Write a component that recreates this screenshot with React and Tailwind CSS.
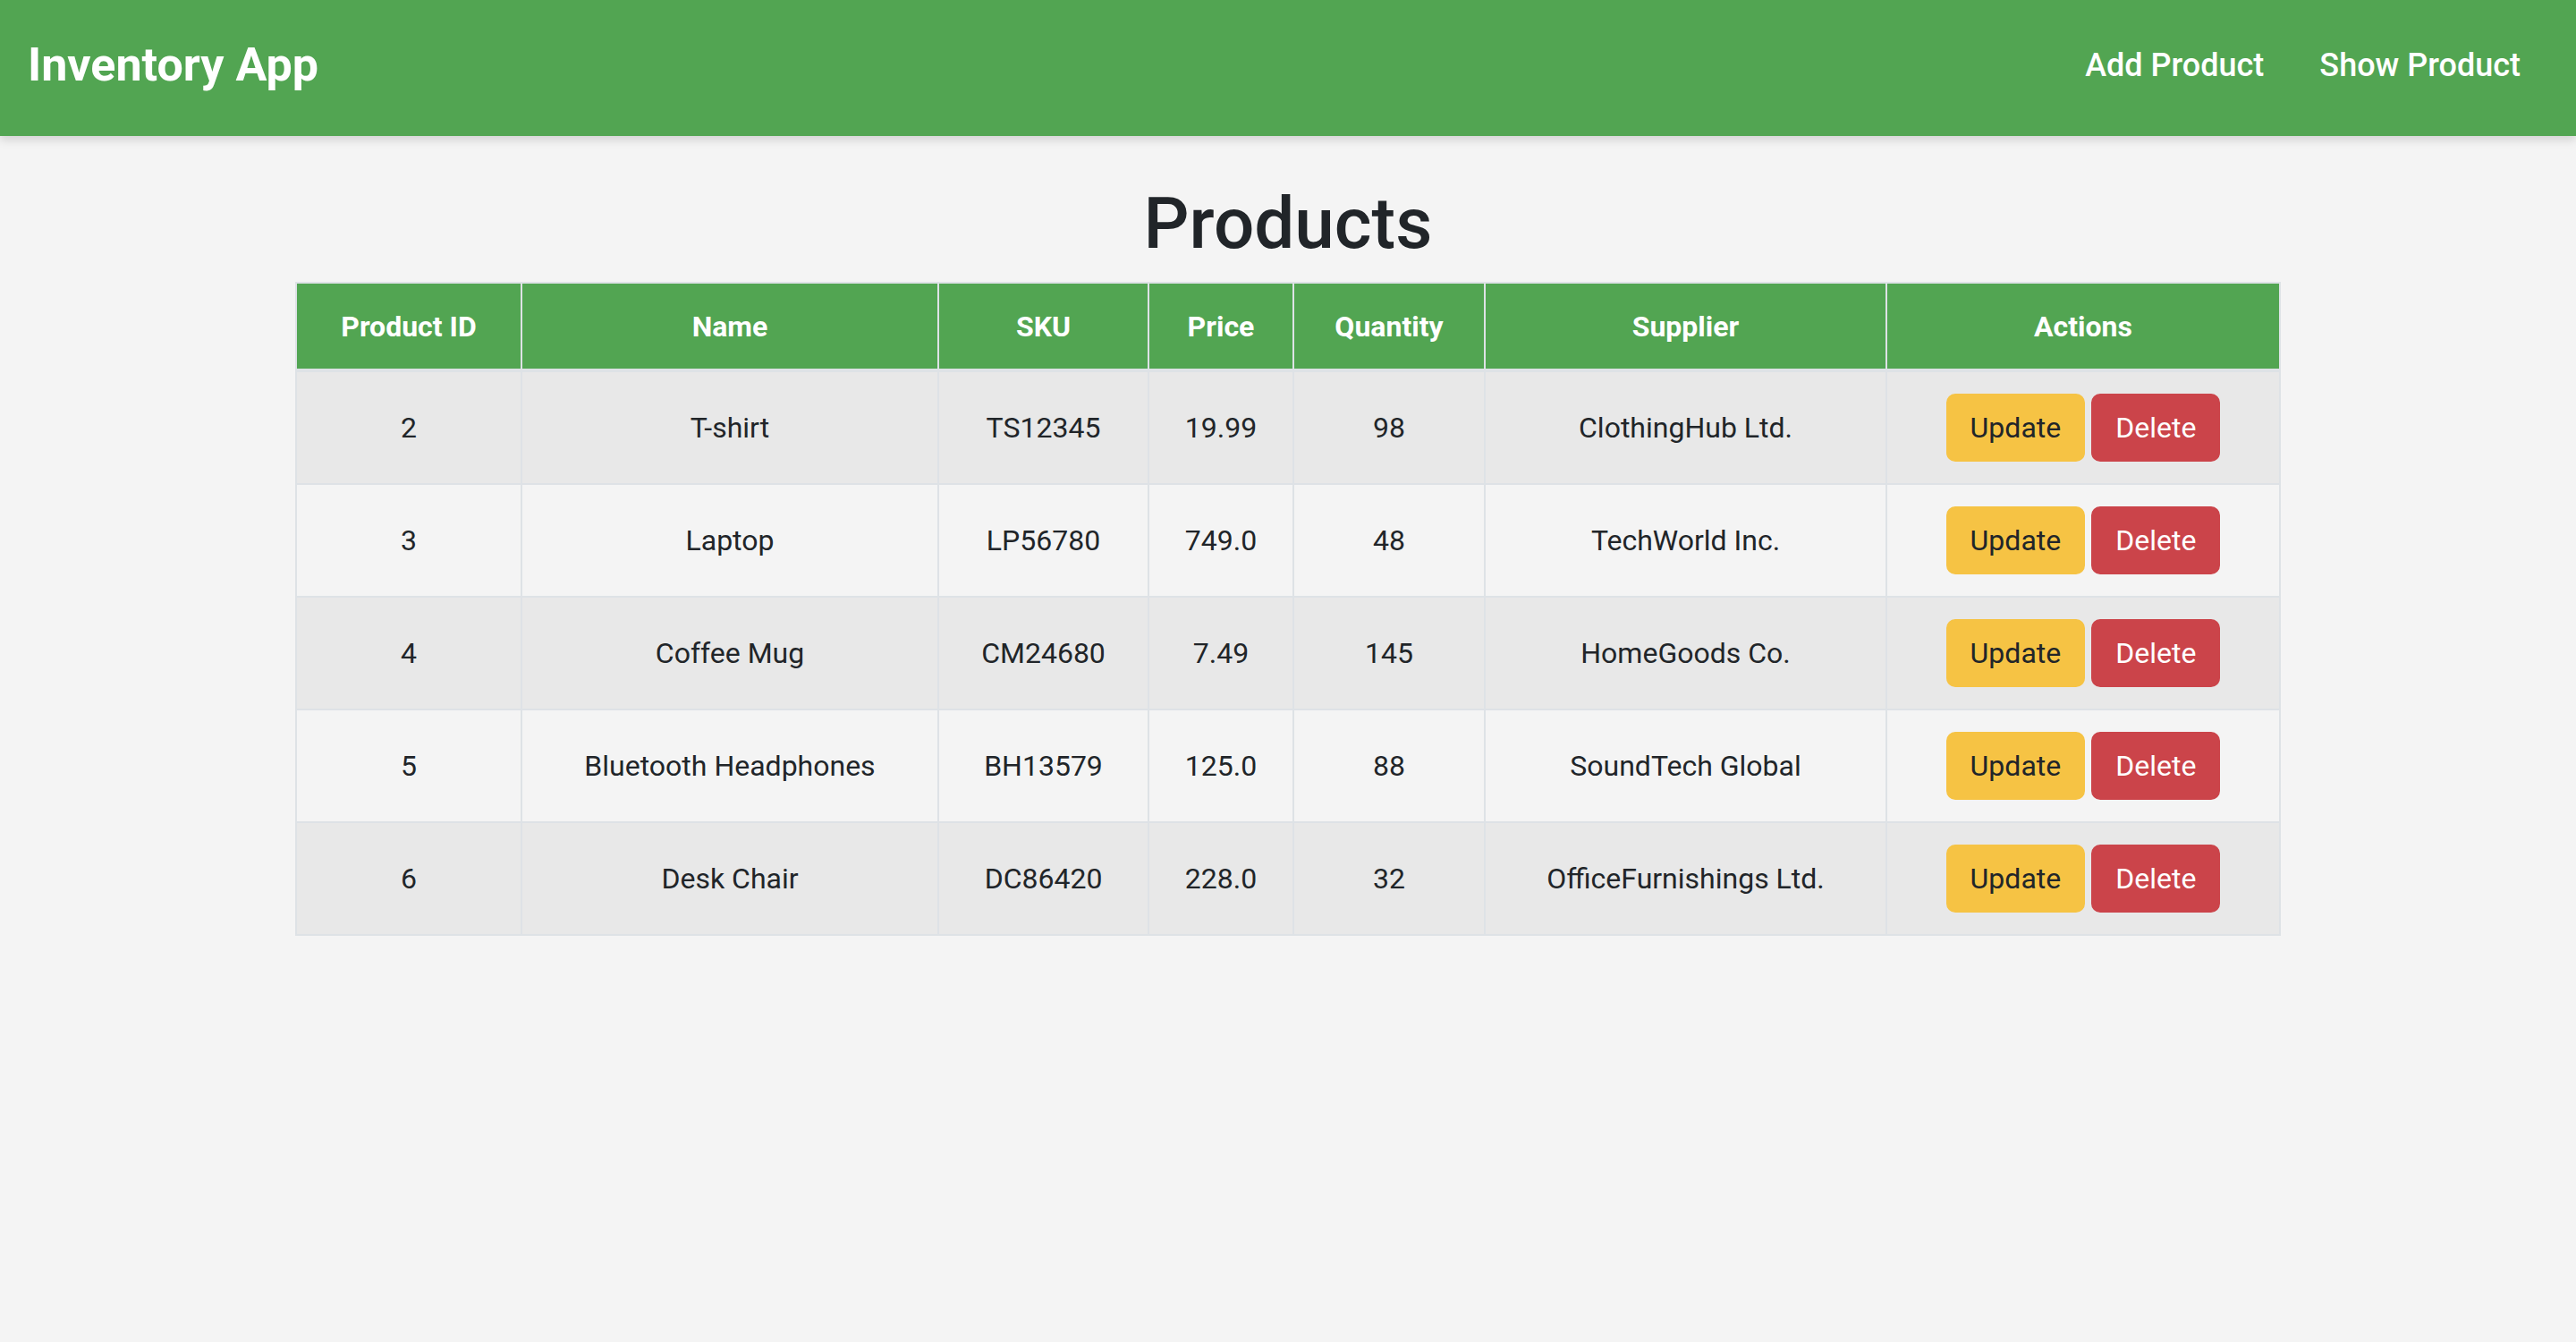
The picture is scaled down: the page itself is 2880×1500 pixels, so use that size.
import React from "react";

const rows = [
  { id: 2, name: "T-shirt", sku: "TS12345", price: "19.99", qty: 98, supplier: "ClothingHub Ltd." },
  { id: 3, name: "Laptop", sku: "LP56780", price: "749.0", qty: 48, supplier: "TechWorld Inc." },
  { id: 4, name: "Coffee Mug", sku: "CM24680", price: "7.49", qty: 145, supplier: "HomeGoods Co." },
  { id: 5, name: "Bluetooth Headphones", sku: "BH13579", price: "125.0", qty: 88, supplier: "SoundTech Global" },
  { id: 6, name: "Desk Chair", sku: "DC86420", price: "228.0", qty: 32, supplier: "OfficeFurnishings Ltd." },
];

const cols = [
  { label: "Product ID", w: "w-[254px]" },
  { label: "Name", w: "w-[466px]" },
  { label: "SKU", w: "w-[235px]" },
  { label: "Price", w: "w-[162px]" },
  { label: "Quantity", w: "w-[214px]" },
  { label: "Supplier", w: "w-[449px]" },
  { label: "Actions", w: "w-[440px]" },
];

export default function App() {
  return (
    <div className="min-h-screen bg-[#f4f4f4] text-[#212529] font-['Roboto',sans-serif]">
      <header className="relative z-10 flex h-[152px] items-center justify-between bg-[#52a552] pl-[31px] pr-[62px] shadow-[0_4px_10px_rgba(0,0,0,0.15)]">
        <div className="mb-[6px] text-[52px] font-bold leading-[60px] text-white">Inventory App</div>
        <nav className="mb-[7px] flex gap-[62px] text-[36px] font-medium leading-[44px] text-white">
          <a href="#">Add Product</a>
          <a href="#">Show Product</a>
        </nav>
      </header>

      <main className="flex flex-col items-center">
        <h1 className="mt-[50px] mb-[17px] text-[80px] font-medium leading-[96px]">Products</h1>
        <table className="w-[2220px] table-fixed border-separate border-spacing-0 text-center text-[32px] leading-[48px]">
          <thead>
            <tr>
              {cols.map((c, i) => (
                <th
                  key={c.label}
                  className={`${c.w} border-t-2 border-r-2 border-b-4 border-[#dee2e6] bg-[#52a552] py-[23.5px] font-bold text-white ${i === 0 ? "border-l-2" : ""}`}
                >
                  {c.label}
                </th>
              ))}
            </tr>
          </thead>
          <tbody>
            {rows.map((r, idx) => {
              const bg = idx % 2 === 0 ? "bg-[#e8e8e8]" : "bg-[#f4f4f4]";
              const cell = `border-r-2 border-b-2 border-[#dee2e6] py-[38px] ${bg}`;
              return (
                <tr key={r.id}>
                  <td className={`${cell} border-l-2`}>{r.id}</td>
                  <td className={cell}>{r.name}</td>
                  <td className={cell}>{r.sku}</td>
                  <td className={cell}>{r.price}</td>
                  <td className={cell}>{r.qty}</td>
                  <td className={cell}>{r.supplier}</td>
                  <td className={`border-r-2 border-b-2 border-[#dee2e6] py-[24px] ${bg}`}>
                    <div className="flex justify-center gap-[7px]">
                      <button className="rounded-[10px] border-2 border-[#f6c344] bg-[#f6c344] px-[25px] py-[12px] text-[32px] leading-[48px] text-[#212529]">
                        Update
                      </button>
                      <button className="rounded-[10px] border-2 border-[#cb444a] bg-[#cb444a] px-[25px] py-[12px] text-[32px] leading-[48px] text-white">
                        Delete
                      </button>
                    </div>
                  </td>
                </tr>
              );
            })}
          </tbody>
        </table>
      </main>
    </div>
  );
}
